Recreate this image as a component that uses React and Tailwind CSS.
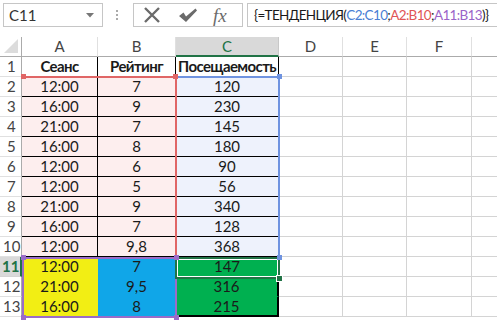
import React from 'react'

const cols = ['A', 'B', 'C', 'D', 'E', 'F', '']

const rows = [
  ['Сеанс', 'Рейтинг', 'Посещаемость'],
  ['12:00', '7', '120'],
  ['16:00', '9', '230'],
  ['21:00', '7', '145'],
  ['16:00', '8', '180'],
  ['12:00', '6', '90'],
  ['12:00', '5', '56'],
  ['21:00', '9', '340'],
  ['16:00', '7', '128'],
  ['12:00', '9,8', '368'],
  ['12:00', '7', '147'],
  ['21:00', '9,5', '316'],
  ['16:00', '8', '215'],
]

function cellClass(r, c) {
  // r: 1..13, c: 0..6
  if (c > 2) return 'border-r border-b border-[#d4d4d4] bg-white'
  if (r === 1) return 'border-r border-b border-black bg-white font-bold tracking-[-0.6px]'
  if (r <= 10) {
    if (c === 2) return 'border-r border-b border-black bg-[#eef2fc]'
    return 'border-r border-b border-black bg-[#fdeeee]'
  }
  if (c === 0) return 'border-r border-b border-transparent bg-[#f2ee14]'
  if (c === 1) return 'border-r border-b border-transparent bg-[#10a6e8]'
  if (r === 13) return 'border-r-2 border-b-2 border-black bg-[#00b050]'
  if (r === 12) return 'border-r-2 border-b border-r-black border-b-transparent bg-[#00b050]'
  return 'border-r border-b border-transparent bg-[#00b050]'
}

function Handle({ className }) {
  return <div className={'absolute w-[5px] h-[5px] ' + className} />
}

export default function App() {
  return (
    <div className="w-[497px] h-[321px] overflow-hidden bg-white font-[Lato,'Noto_Sans',sans-serif] text-[15px] text-[#1a1a1a]">
      {/* formula bar */}
      <div className="flex items-center h-[37px] pt-[3px] pb-[10px]">
        <div className="shrink-0 ml-[3px] w-[100px] h-[24px] border border-[#c6c6c6] flex items-center justify-between pl-[5px] pr-[8px]">
          <span className="text-[#333]">C11</span>
          <svg width="8" height="5" viewBox="0 0 8 5"><path d="M0 0h8L4 4.5z" fill="#777" /></svg>
        </div>
        <div className="shrink-0 ml-[13px] w-[3px] flex flex-col gap-[2px]">
          <span className="w-[2px] h-[2px] bg-[#aaa]" />
          <span className="w-[2px] h-[2px] bg-[#aaa]" />
          <span className="w-[2px] h-[2px] bg-[#aaa]" />
        </div>
        <div className="shrink-0 ml-[14px] w-[110px] h-[24px] border border-[#c6c6c6] flex items-center">
          <svg className="ml-[9px]" width="18" height="16" viewBox="0 0 18 16">
            <path d="M2 1l14 14M16 1L2 15" stroke="#6b6b6b" strokeWidth="2.4" fill="none" />
          </svg>
          <svg className="ml-[17px]" width="20" height="16" viewBox="0 0 20 16">
            <path d="M1 9l4.5-3.5L8 9.5 17.5 1.5 19 3.5 8 15z" fill="#6b6b6b" />
          </svg>
          <span className="ml-[15px] font-['Liberation_Serif',serif] italic text-[19px] text-[#6b6b6b] leading-none">fx</span>
        </div>
        <div className="ml-[4px] flex-1 min-w-0 h-[24px] border border-[#c6c6c6] border-r-0 flex items-center pl-[6px] whitespace-nowrap text-[13.5px] tracking-[-0.65px]">
          <span>{'{=ТЕНДЕНЦИЯ('}</span>
          <span className="text-[#4a7fd4]">C2:C10</span>
          <span>;</span>
          <span className="text-[#e05555]">A2:B10</span>
          <span>;</span>
          <span className="text-[#9a63c8]">A11:B13</span>
          <span>{')}'}</span>
        </div>
      </div>

      {/* sheet */}
      <div className="relative">
        <div className="grid grid-cols-[22px_76px_78px_103px_64px_64px_65px_65px] grid-rows-[20px_repeat(13,20px)]">
          <div className="border-r border-b border-[#ababab] bg-white flex items-end justify-end p-[3px]">
            <svg width="14" height="14" viewBox="0 0 14 14"><path d="M14 0v14H0z" fill="#dcdcdc" /></svg>
          </div>
          {cols.map((c, ci) =>
            c === 'C' ? (
              <div key={ci} className="bg-[#d9d9d9] border-r border-[#c8c8c8] border-b-2 border-b-[#217346] flex items-center justify-center text-[#217346]">
                {c}
              </div>
            ) : (
              <div key={ci} className="bg-white border-r border-[#e0e0e0] border-b border-b-[#ababab] flex items-center justify-center text-[#444]">
                {c}
              </div>
            )
          )}
          {rows.map((row, i) => {
            const r = i + 1
            return (
              <React.Fragment key={r}>
                {r === 11 ? (
                  <div className="bg-[#d9d9d9] border-b border-[#d4d4d4] border-r-2 border-r-[#217346] flex items-center pl-[2px] text-[#217346] font-bold">
                    {r}
                  </div>
                ) : (
                  <div className="bg-white border-b border-[#e0e0e0] border-r border-r-[#ababab] flex items-center pl-[3px] text-[#444]">
                    <span className={r < 10 ? 'pl-[4px]' : ''}>{r}</span>
                  </div>
                )}
                {cols.map((c, ci) => (
                  <div key={ci} className={'flex items-center justify-center ' + cellClass(r, ci)}>
                    {row[ci] || ''}
                  </div>
                ))}
              </React.Fragment>
            )
          })}
        </div>

        {/* range outlines */}
        <div className="absolute left-[22px] top-[39px] w-[155px] h-[181px] border-t-2 border-r-2 border-[#e06666]" />
        <div className="absolute left-[177px] top-[39px] w-[103px] h-[181px] border-t-2 border-r-2 border-[#6f93e0]" />
        <div className="absolute left-[22px] top-[220px] w-[155px] h-[61px] border-2 border-[#9b6cc8]" />
        <div className="absolute left-[175px] top-[220px] w-[105px] h-[22px] border-2 border-[#217346]">
          <div className="w-full h-full border border-white" />
        </div>

        <Handle className="left-[21px] top-[37px] bg-[#e06666]" />
        <Handle className="left-[173px] top-[37px] bg-[#e06666]" />
        <Handle className="left-[277px] top-[37px] bg-[#6f93e0]" />
        <Handle className="left-[277px] top-[218px] bg-[#6f93e0]" />
        <Handle className="left-[21px] top-[218px] bg-[#9b6cc8]" />
        <Handle className="left-[174px] top-[218px] bg-[#9b6cc8]" />
        <Handle className="left-[21px] top-[278px] bg-[#9b6cc8]" />
        <Handle className="left-[174px] top-[278px] bg-[#9b6cc8]" />
        <div className="absolute left-[276px] top-[238px] w-[7px] h-[7px] bg-[#217346] border border-white" />
      </div>
    </div>
  )
}
